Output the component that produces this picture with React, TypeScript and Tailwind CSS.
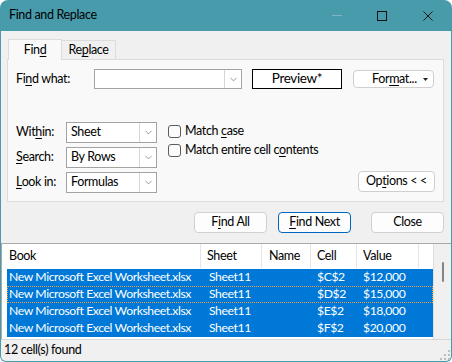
import { ChevronDown } from "lucide-react";

const rows = [
  { cell: "$C$2", value: "$12,000" },
  { cell: "$D$2", value: "$15,000" },
  { cell: "$E$2", value: "$18,000" },
  { cell: "$F$2", value: "$20,000" },
];

function Select({ value }: { value: string }) {
  return (
    <div className="w-[91px] h-[21px] flex bg-white border border-[#a3a3a3]">
      <div className="flex-1 pl-[4px] flex items-center">{value}</div>
      <div className="w-[17px] border-l border-[#d6d6d6] grid place-items-center">
        <ChevronDown className="w-[11px] h-[11px] text-[#6e6e6e]" strokeWidth={1.5} />
      </div>
    </div>
  );
}

function Check({ children }: { children: React.ReactNode }) {
  return (
    <div className="flex items-center h-[19px]">
      <div className="w-[13px] h-[13px] rounded-[3px] border border-[#5c5c5c] bg-[#fbfbfb]" />
      <span className="ml-[4px]">{children}</span>
    </div>
  );
}

function Btn({ children, blue }: { children: React.ReactNode; blue?: boolean }) {
  return (
    <div
      className={
        "w-[73px] h-[21px] rounded-[4px] bg-[#fdfdfd] grid place-items-center border " +
        (blue ? "border-[#0067c0]" : "border-[#d0d0d0]")
      }
    >
      {children}
    </div>
  );
}

export default function App() {
  return (
    <div className="w-[452px] h-[362px] bg-[#479bab] rounded-t-[8px] rounded-b-[6px] overflow-hidden flex flex-col text-[12.5px] tracking-[-0.35px] text-black font-['Lato',sans-serif] leading-none whitespace-nowrap">
      {/* title bar */}
      <div className="h-[31px] flex items-center pl-[9px] relative">
        <span>Find and Replace</span>
        <div className="ml-auto flex items-center h-full">
          <div className="w-[10px] h-px bg-[#7db5c1] mr-[35px]" />
          <div className="w-[10px] h-[10px] border border-[#111] mr-[36px]" />
          <svg width="10" height="10" viewBox="0 0 10 10" className="mr-[19px]">
            <path d="M0.5 0.5 L9.5 9.5 M9.5 0.5 L0.5 9.5" stroke="#111" strokeWidth="1" />
          </svg>
        </div>
      </div>

      <div className="flex-1 mx-px mb-px bg-[#f0f0f0] flex flex-col rounded-b-[5px]">
        {/* tabs */}
        <div className="mt-[8px] h-[20px] pl-[7px] flex items-start">
          <div className="relative z-10 w-[54px] h-[21px] bg-[#f9f9f9] border border-b-0 border-[#dcdcdc] grid place-items-center">
            <span>
              Fin<u className="underline-offset-2">d</u>
            </span>
          </div>
          <div className="mt-px w-[54px] h-[19px] bg-[#f0f0f0] border border-b-0 border-l-0 border-[#dcdcdc] grid place-items-center">
            <span>
              Re<u className="underline-offset-2">p</u>lace
            </span>
          </div>
        </div>

        {/* panel */}
        <div className="ml-[6px] w-[437px] h-[143px] bg-[#f9f9f9] border border-[#dcdcdc] pt-[9px] pl-[8px] pr-[8px] flex flex-col">
          <div className="h-[20px] flex items-center">
            <div className="w-[78px]">
              Fi<u className="underline-offset-2">n</u>d what:
            </div>
            <div className="w-[148px] h-[20px] flex bg-white border border-[#a3a3a3]">
              <div className="flex-1" />
              <div className="w-[17px] border-l border-[#d6d6d6] grid place-items-center">
                <ChevronDown className="w-[11px] h-[11px] text-[#6e6e6e]" strokeWidth={1.5} />
              </div>
            </div>
            <div className="ml-[10px] w-[90px] h-[20px] bg-white border border-black grid place-items-center text-[13.5px]">
              Preview*
            </div>
            <div className="ml-[11px] w-[81px] h-[18px] bg-white border border-[#cfcfcf] rounded-[4px] flex items-center">
              <span className="ml-[18px]">
                For<u className="underline-offset-2">m</u>at...
              </span>
              <svg width="5" height="3" viewBox="0 0 5 3" className="ml-auto mr-[5px]">
                <path d="M0 0 H5 L2.5 3 Z" fill="#222" />
              </svg>
            </div>
          </div>

          <div className="mt-[33px] flex">
            <div className="flex flex-col gap-[4px]">
              <div className="flex items-center">
                <div className="w-[50px]">
                  Wit<u className="underline-offset-2">h</u>in:
                </div>
                <Select value="Sheet" />
              </div>
              <div className="flex items-center">
                <div className="w-[50px]">
                  <u className="underline-offset-2">S</u>earch:
                </div>
                <Select value="By Rows" />
              </div>
              <div className="flex items-center">
                <div className="w-[50px]">
                  <u className="underline-offset-2">L</u>ook in:
                </div>
                <Select value="Formulas" />
              </div>
            </div>
            <div className="ml-[11px] flex flex-col">
              <Check>
                Match <u className="underline-offset-2">c</u>ase
              </Check>
              <Check>
                Match entire cell c<u className="underline-offset-2">o</u>ntents
              </Check>
            </div>
            <div className="ml-auto self-end mb-px w-[77px] h-[21px] bg-white border border-[#cfcfcf] rounded-[4px] grid place-items-center">
              <span>
                Op<u className="underline-offset-2">t</u>ions {"< <"}
              </span>
            </div>
          </div>
        </div>

        {/* buttons */}
        <div className="mt-[10px] flex justify-end pr-[7px]">
          <Btn>
            <span>
              F<u className="underline-offset-2">i</u>nd All
            </span>
          </Btn>
          <div className="ml-[11px]">
            <Btn blue>
              <span>
                <u className="underline-offset-2">F</u>ind Next
              </span>
            </Btn>
          </div>
          <div className="ml-[20px]">
            <Btn>Close</Btn>
          </div>
        </div>

        {/* results */}
        <div className="mt-[10px] h-[96px] bg-white border-t border-l border-[#a9a9a9] flex">
          <div className="flex-1 flex flex-col">
            <div className="h-[24px] flex">
              <div className="w-[199px] pl-[7px] flex items-center border-r border-[#e5e5e5]">Book</div>
              <div className="w-[61px] pl-[6px] flex items-center border-r border-[#e5e5e5]">Sheet</div>
              <div className="w-[49px] pl-[7px] flex items-center border-r border-[#e5e5e5]">Name</div>
              <div className="w-[46px] pl-[6px] flex items-center border-r border-[#e5e5e5]">Cell</div>
              <div className="w-[62px] pl-[6px] flex items-center border-r border-[#e5e5e5]">Value</div>
            </div>
            <div className="mt-px ml-[5px] flex flex-col text-[12.2px] tracking-[-0.4px]">
              {rows.map((r, i) => (
                <div
                  key={r.cell}
                  className={
                    "h-[17px] flex items-center bg-[#0078d7] text-white " +
                    (i === 1 ? "outline outline-1 outline-dotted outline-offset-[-1px] outline-[#f0a040]" : "")
                  }
                >
                  <div className="w-[194px] pl-[2px]">New Microsoft Excel Worksheet.xlsx</div>
                  <div className="w-[61px] pl-[8px]">Sheet11</div>
                  <div className="w-[49px]" />
                  <div className="w-[46px] pl-[6px]">{r.cell}</div>
                  <div className="w-[75px] pl-[6px]">{r.value}</div>
                </div>
              ))}
            </div>
          </div>
          <div className="w-[18px] bg-[#f0f0f0] border-l border-[#e0e0e0] flex justify-center pt-[18px]">
            <div className="w-[2px] h-[20px] rounded-full bg-[#858585]" />
          </div>
        </div>

        {/* status */}
        <div className="flex-1 flex items-center pl-[3px] border-t border-[#d8d8d8] relative">
          <span>12 cell(s) found</span>
          <svg width="10" height="10" viewBox="0 0 10 10" className="absolute right-[1px] bottom-[1px]">
            <rect x="8" y="0" width="2" height="2" fill="#bdbdbd" />
            <rect x="4" y="4" width="2" height="2" fill="#bdbdbd" />
            <rect x="8" y="4" width="2" height="2" fill="#bdbdbd" />
            <rect x="0" y="8" width="2" height="2" fill="#bdbdbd" />
            <rect x="4" y="8" width="2" height="2" fill="#bdbdbd" />
            <rect x="8" y="8" width="2" height="2" fill="#bdbdbd" />
          </svg>
        </div>
      </div>
    </div>
  );
}
